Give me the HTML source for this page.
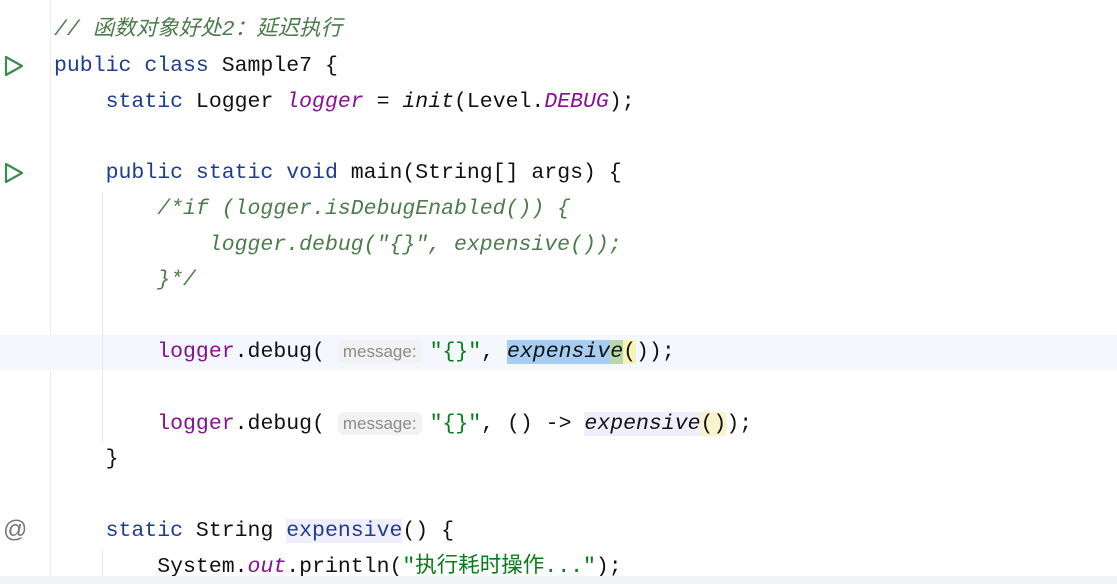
<!DOCTYPE html>
<html><head><meta charset="utf-8"><style>
html,body{margin:0;padding:0;background:#fff;width:1117px;height:584px;overflow:hidden;position:relative}
.l{position:absolute;left:54px;height:36px;line-height:36px;font-family:"Liberation Mono","Noto Sans CJK SC",monospace;font-size:21.5px;color:#111;white-space:pre}
.k{color:#1f3d8f}.c{color:#4c7c4c;font-style:italic}.p{color:#871094;font-style:italic}.s{color:#067d17}.i{font-style:italic}
.h{font-family:"Liberation Sans",sans-serif;font-size:17px;color:#8a8a8a;background:#f2f2f2;border-radius:5px;padding:2px 5px;margin-right:8px}
.gut{position:absolute;left:50px;top:0;width:1px;height:576px;background:#ececec}
.ig{position:absolute;left:102px;width:1px;background:#e8e8e8}
.tri{position:absolute;left:3px}
</style></head><body>
<div class="gut"></div>
<div style="position:absolute;left:0;top:335px;width:1117px;height:35px;background:#f4f7fd"></div>
<div class="ig" style="top:192px;height:250px"></div>
<div class="ig" style="top:550px;height:26px"></div>
<svg class="tri" style="top:55px" width="22" height="22"><path d="M3 2 L19 11 L3 20 Z" fill="none" stroke="#3d8a4d" stroke-width="2.2" stroke-linejoin="round"/></svg>
<svg class="tri" style="top:162px" width="22" height="22"><path d="M3 2 L19 11 L3 20 Z" fill="none" stroke="#3d8a4d" stroke-width="2.2" stroke-linejoin="round"/></svg>
<div style="position:absolute;left:3px;top:516px;font:24px 'Liberation Sans',sans-serif;color:#777">@</div>
<div class="l" style="top:12px"><span class="c">// 函数对象好处2：延迟执行</span></div>
<div class="l" style="top:48px"><span class="k">public class</span> Sample7 {</div>
<div class="l" style="top:84px">    <span class="k">static</span> Logger <span class="p">logger</span> = <span class="i">init</span>(Level.<span class="p">DEBUG</span>);</div>
<div class="l" style="top:155px">    <span class="k">public static void</span> main(String[] args) {</div>
<div class="l" style="top:191px">        <span class="c">/*if (logger.isDebugEnabled()) {</span></div>
<div class="l" style="top:227px">            <span class="c">logger.debug("{}", expensive());</span></div>
<div class="l" style="top:262px">        <span class="c">}*/</span></div>
<div class="l" style="top:334px">        <span class="p" style="font-style:normal">logger</span>.debug( <span class="h">message:</span><span class="s">"{}"</span>, <span class="i" style="background:#a7cdf3">expensiv<span style="background:#b9d7a8">e</span></span><span style="background:#f6f3b8">(</span>));</div>
<div class="l" style="top:406px">        <span class="p" style="font-style:normal">logger</span>.debug( <span class="h">message:</span><span class="s">"{}"</span>, () -&gt; <span class="i" style="background:#f1eefb">expensive</span><span style="background:#fbf3cc">()</span>);</div>
<div class="l" style="top:441px">    }</div>
<div class="l" style="top:513px">    <span class="k">static</span> String <span class="k" style="background:#f0eefb">expensive</span>() {</div>
<div class="l" style="top:549px">        System.<span class="p">out</span>.println(<span class="s">"执行耗时操作..."</span>);</div>
<div style="position:absolute;left:0;top:576px;width:1117px;height:8px;background:#f3f4f6"></div>
</body></html>
